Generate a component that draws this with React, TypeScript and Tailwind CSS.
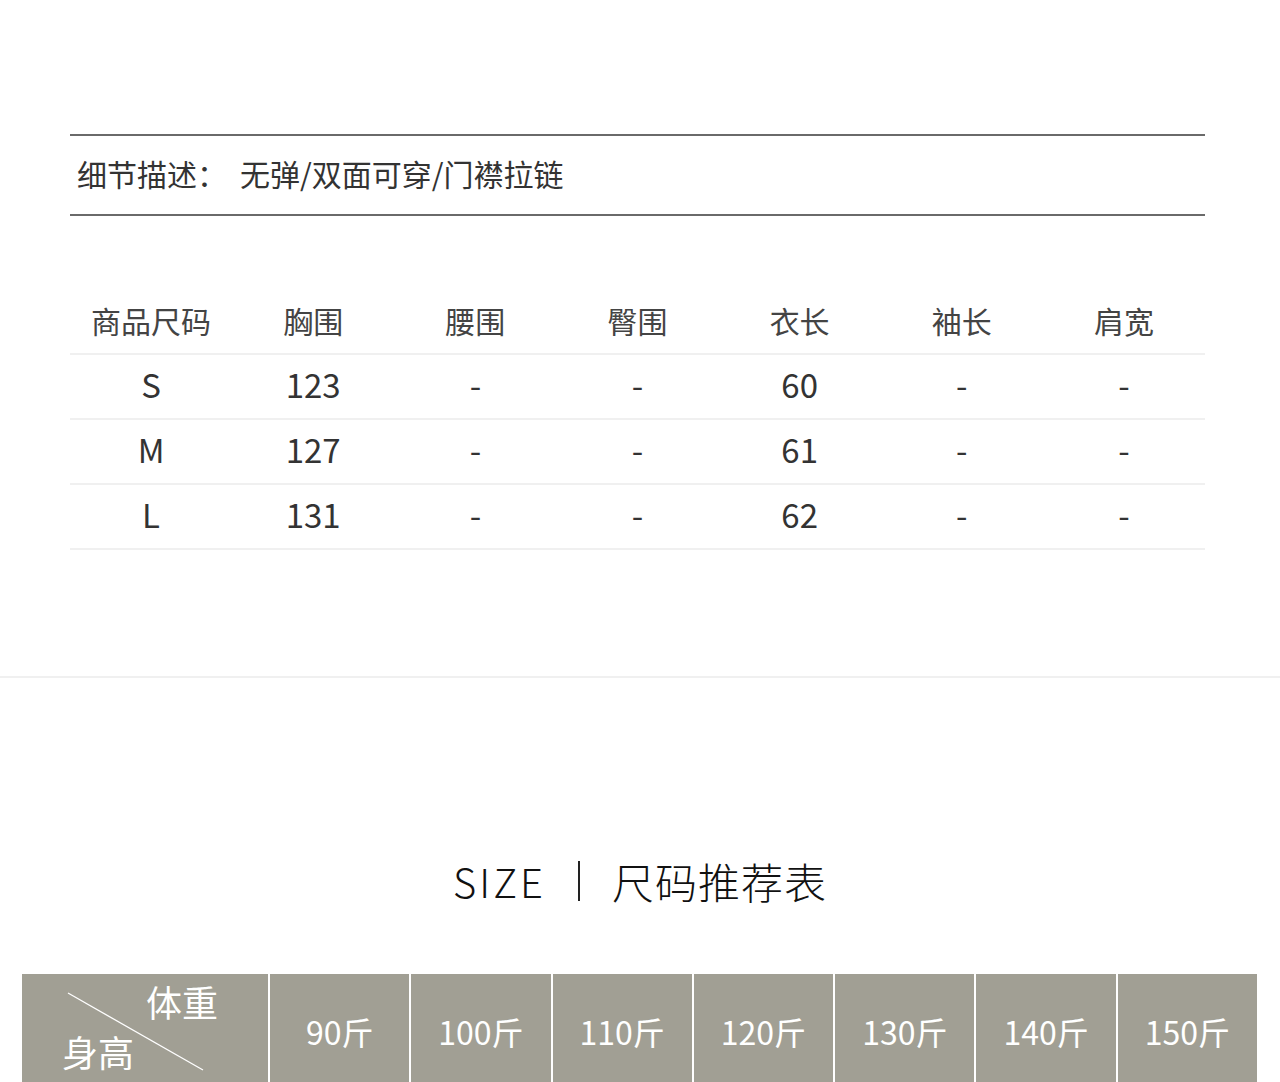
import React from "react";

const cjk = { fontFamily: '"Noto Sans CJK SC", "Noto Sans", sans-serif' };

const headers = ["商品尺码", "胸围", "腰围", "臀围", "衣长", "袖长", "肩宽"];
const rows = [
  ["S", "123", "-", "-", "60", "-", "-"],
  ["M", "127", "-", "-", "61", "-", "-"],
  ["L", "131", "-", "-", "62", "-", "-"],
];
const weights = ["90斤", "100斤", "110斤", "120斤", "130斤", "140斤", "150斤"];

export default function App() {
  return (
    <div className="w-[1280px] h-[1082px] overflow-hidden bg-white text-[#333]" style={cjk}>
      <div className="pl-[70px] pr-[75px] pt-[134px]">
        <div className="border-t-2 border-b-2 border-[#6a6a6a] h-[82px] flex items-center pl-[7px] pb-[5px] text-[30px] leading-none text-[#333]">
          <span>细节描述：</span>
          <span className="ml-[13px]">无弹/双面可穿/门襟拉链</span>
        </div>

        <div className="mt-[74px]">
          <div className="grid grid-cols-7 h-[65px] border-b-2 border-[#f0f0f0] items-center text-[30px] leading-none text-[#444]">
            {headers.map((h) => (
              <div key={h} className="text-center pb-[4px]">{h}</div>
            ))}
          </div>
          {rows.map((r, i) => (
            <div key={i} className="grid grid-cols-7 h-[65px] border-b-2 border-[#f0f0f0] items-center text-[33px] leading-none text-[#333]">
              {r.map((c, j) => (
                <div key={j} className="text-center pb-[5px]">{c}</div>
              ))}
            </div>
          ))}
        </div>
      </div>

      <div className="mt-[126px] border-t-2 border-[#f0f0f0]" />

      <div className="mt-[179px] h-[48px] flex items-center justify-center text-[#111] font-light">
        <span className="text-[40px] leading-none tracking-[3px]">SIZE</span>
        <span className="mx-[32px] w-[2px] h-[40px] bg-[#222]" />
        <span className="text-[42px] leading-none tracking-[1px]">尺码推荐表</span>
      </div>

      <div className="mt-[69px] ml-[22px] w-[1235px] grid grid-cols-[246px_repeat(7,1fr)] gap-x-[2px] h-[114px]">
        <div className="relative bg-[#a19f94] flex flex-col text-white text-[36px] leading-none">
          <svg className="absolute inset-0" width="246" height="114">
            <line x1="46" y1="19" x2="181" y2="96" stroke="white" strokeWidth="1.3" />
          </svg>
          <span className="self-end mr-[50px] mt-[9px]">体重</span>
          <span className="ml-[40px] mt-[14px]">身高</span>
        </div>
        {weights.map((w) => (
          <div key={w} className="bg-[#a19f94] flex items-center justify-center text-white text-[32px] leading-none">
            {w}
          </div>
        ))}
      </div>
    </div>
  );
}
